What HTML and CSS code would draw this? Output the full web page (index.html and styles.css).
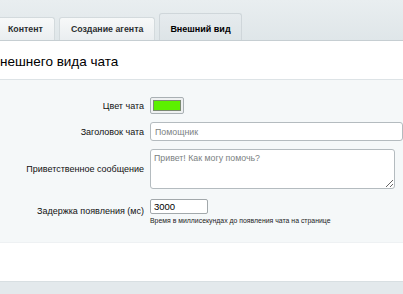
FILE: index.html
```html
<!DOCTYPE html>
<html lang="ru">
<head>
    <meta charset="UTF-8">
    <meta name="viewport" content="width=device-width, initial-scale=1.0">
    <title>Внешний вид чата</title>
    <link rel="stylesheet" href="styles.css">
</head>
<body>
    <div class="tabs">
        <a href="#" class="tab">Контент</a>
        <a href="#" class="tab">Создание агента</a>
        <a href="#" class="tab active">Внешний вид</a>
    </div>

    <div class="panel">
        <h2 class="panel-title">Внешнего вида чата</h2>

        <div class="form">
            <label class="label" for="color">Цвет чата</label>
            <div class="field">
                <span class="swatch" id="color"><span class="swatch-fill"></span></span>
            </div>

            <label class="label" for="title">Заголовок чата</label>
            <div class="field">
                <input class="input wide" id="title" type="text" placeholder="Помощник">
            </div>

            <label class="label" for="greeting">Приветственное сообщение</label>
            <div class="field">
                <textarea class="textarea" id="greeting" placeholder="Привет! Как могу помочь?"></textarea>
            </div>

            <label class="label" for="delay">Задержка появления (мс)</label>
            <div class="field delay">
                <input class="input short" id="delay" type="text" value="3000">
                <div class="hint">Время в миллисекундах до появления чата на странице</div>
            </div>
        </div>

        <div class="panel-bottom"></div>
    </div>

    <div class="footer-bar"></div>
</body>
</html>
```

FILE: styles.css
```css
/* page base */
body {
    margin: 0;
    background: #e3e9ec;
    font-family: "Liberation Sans", Arial, sans-serif;
    color: #000;
    overflow: hidden;
}

/* tab strip */
.tabs {
    display: flex;
    align-items: flex-end;
    gap: 4px;
    height: 40px;
    margin-left: -4px;
    background: linear-gradient(to bottom, #e9eef0, #dfe6e9);
}

.tab {
    display: block;
    height: 23px;
    line-height: 23px;
    padding: 0 11px;
    box-sizing: border-box;
    border: 1px solid #d3dadd;
    border-bottom: none;
    border-radius: 3px 3px 0 0;
    background: linear-gradient(to bottom, #f7f9f9, #eaeef0);
    color: #2b2f31;
    font-size: 8.8px;
    font-weight: bold;
    text-decoration: none;
}

.tab.active {
    height: 27px;
    line-height: 31px;
    padding: 0 10px;
    background: linear-gradient(to bottom, #e6ebee, #dde4e7);
    border-color: #cfd6da;
    color: #000;
    font-size: 9px;
}

/* white panel */
.panel {
    background: #fff;
    border-top: 1px solid #c6ced2;
}

.panel-title {
    margin: 0;
    height: 38px;
    line-height: 42px;
    font-size: 13.5px;
    font-weight: normal;
    text-indent: -9px;
    white-space: nowrap;
    overflow: hidden;
    border-bottom: 1px solid #dde3e6;
}

/* form grid */
.form {
    display: grid;
    grid-template-columns: 144px 1fr;
    column-gap: 6px;
    row-gap: 8px;
    align-items: center;
    padding: 17px 0 18px;
    background: #f5f8f9;
}

.label {
    text-align: right;
    font-size: 9px;
    color: #111;
}

.field {
    display: flex;
    flex-direction: column;
    align-items: flex-start;
}

.field.delay {
    padding-top: 2px;
}

.swatch {
    display: block;
    width: 34px;
    height: 17px;
    padding: 2px;
    box-sizing: border-box;
    border: 1px solid #a9b0b4;
    border-radius: 2px;
    background: #eef0f1;
}

.swatch-fill {
    display: block;
    height: 100%;
    background: #5cf000;
    border: 1px solid #7a8a70;
    box-sizing: border-box;
}

.input,
.textarea {
    font-family: "Liberation Sans", Arial, sans-serif;
    font-size: 8.8px;
    color: #000;
    background: #fff;
    border: 1px solid #b4bbbf;
    border-radius: 3px;
    box-sizing: border-box;
}

.input::placeholder,
.textarea::placeholder {
    color: #7b7f82;
}

.input.wide {
    width: 253px;
    height: 19px;
    padding: 0 4px;
}

.textarea {
    width: 245px;
    height: 40px;
    padding: 3px 3px;
    resize: vertical;
    display: block;
}

.input.short {
    width: 58px;
    height: 15px;
    padding: 0 3px;
    border-color: #a2a8ab;
    border-radius: 2px;
    font-size: 9.5px;
}

.hint {
    margin-top: 3px;
    font-size: 6.9px;
    color: #222;
    white-space: nowrap;
}

.panel-bottom {
    height: 38px;
    border-top: 1px solid #eef1f3;
    border-bottom: 1px solid #d8dfe2;
}

.footer-bar {
    height: 20px;
    background: #e3e9ec;
}
```
